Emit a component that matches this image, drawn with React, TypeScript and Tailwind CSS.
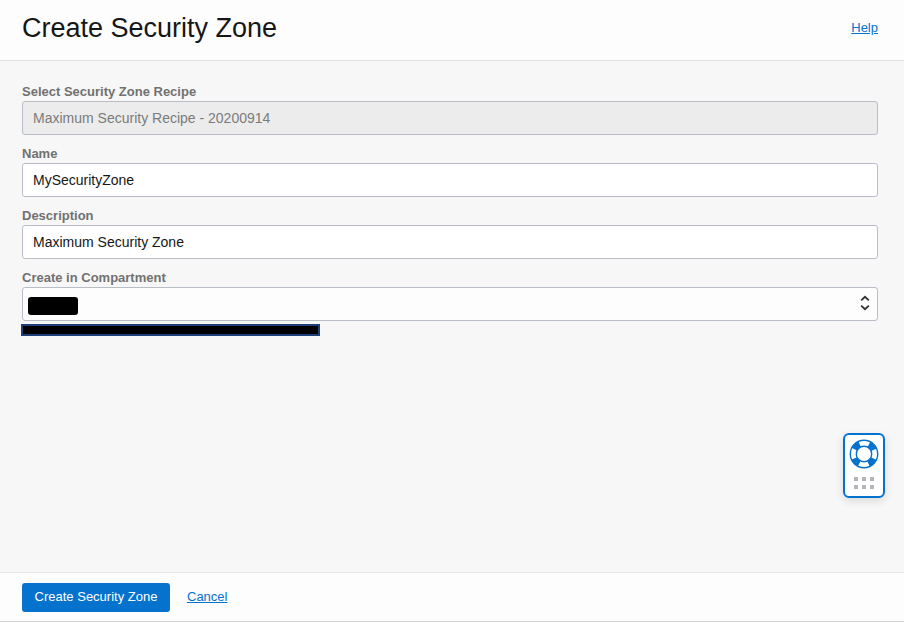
import { useState } from "react";
import type { ReactNode } from "react";

function Field({ id, label, children }: { id: string; label: string; children: ReactNode }) {
  return (
    <div className="flex flex-col">
      <label htmlFor={id} className="text-[13px] leading-[18px] font-bold text-[#717171]">
        {label}
      </label>
      {children}
    </div>
  );
}

const control = "h-[34px] w-full rounded-[3px] border border-[#b9bec6] px-[10px] text-sm outline-none";

function LifebuoyIcon() {
  return (
    <svg viewBox="0 0 30 30" className="size-[30px] shrink-0" fill="none" stroke="#0572ce" aria-hidden="true">
      <circle cx="15" cy="15" r="10.8" strokeWidth="6.4" strokeDasharray="7.4 9.5646" strokeDashoffset="-4.782" />
      <circle cx="15" cy="15" r="13.7" strokeWidth="1.4" />
      <circle cx="15" cy="15" r="7.7" strokeWidth="1.4" />
    </svg>
  );
}

export default function App() {
  const [name, setName] = useState("MySecurityZone");
  const [description, setDescription] = useState("Maximum Security Zone");

  return (
    <div className="flex min-h-screen flex-col bg-white pb-[2px] font-['Liberation_Sans',Arial,sans-serif] text-[#161616]">
      <header className="flex h-[61px] items-center justify-between border-b border-[#e2e2e3] bg-[#fdfdfd] pr-[26px] pb-1 pl-[22px]">
        <h1 className="text-[27px] leading-8">Create Security Zone</h1>
        <a href="#help" className="text-[13px] text-[#0572ce] underline">
          Help
        </a>
      </header>

      <main className="flex-1 bg-[#f7f7f7] pt-[22px] pr-[26px] pb-6 pl-[22px]">
        <form id="zone-form" className="flex flex-col gap-[10px]" onSubmit={(e) => e.preventDefault()}>
          <Field id="recipe" label="Select Security Zone Recipe">
            <input id="recipe" disabled value="Maximum Security Recipe - 20200914" className={`${control} bg-[#ececec] text-[#7b7b7b]`} />
          </Field>
          <Field id="name" label="Name">
            <input id="name" value={name} onChange={(e) => setName(e.target.value)} className={`${control} bg-white`} />
          </Field>
          <Field id="description" label="Description">
            <input id="description" value={description} onChange={(e) => setDescription(e.target.value)} className={`${control} bg-white`} />
          </Field>
          <Field id="compartment" label="Create in Compartment">
            <div className="relative">
              <select id="compartment" className={`${control} appearance-none bg-[#fdfdfd]`}>
                <option value="redacted" aria-label="Redacted compartment"></option>
              </select>
              <span className="pointer-events-none absolute top-[10px] left-[6px] h-[18px] w-[50px] rounded-[3px] bg-black" />
              <svg
                viewBox="0 0 10 16"
                className="pointer-events-none absolute top-2 right-2 h-4 w-[10px]"
                fill="none"
                stroke="#303030"
                strokeWidth="1.8"
                aria-hidden="true"
              >
                <path d="M1.2 5.4 5 1.8l3.8 3.6M1.2 10.6 5 14.2l3.8-3.6" />
              </svg>
            </div>
            <div className="mt-[3px] -ml-px h-3 w-[299px] border-2 border-[#1d4079] bg-black" />
          </Field>
        </form>
      </main>

      <footer className="flex h-[50px] items-center gap-[17px] border-t border-b border-t-[#e6e6e6] border-b-[#d2d2d2] bg-[#fdfdfd] pl-[22px]">
        <button type="submit" form="zone-form" className="h-[29px] w-[148px] rounded-[3px] bg-[#0572ce] text-[13px] text-white">
          Create Security Zone
        </button>
        <a href="#cancel" className="text-[13px] text-[#0572ce] underline">
          Cancel
        </a>
      </footer>

      <button
        type="button"
        aria-label="Support"
        className="fixed right-[19px] bottom-[126px] flex h-[65px] w-[42px] flex-col items-center gap-2 rounded-md border-2 border-[#0572ce] bg-white pt-1 shadow-[0_3px_8px_rgba(0,0,0,0.12)]"
      >
        <LifebuoyIcon />
        <span className="grid grid-cols-3 gap-1">
          <span className="size-1 bg-[#b3b6ba]" />
          <span className="size-1 bg-[#b3b6ba]" />
          <span className="size-1 bg-[#b3b6ba]" />
          <span className="size-1 bg-[#b3b6ba]" />
          <span className="size-1 bg-[#b3b6ba]" />
          <span className="size-1 bg-[#b3b6ba]" />
        </span>
      </button>
    </div>
  );
}
